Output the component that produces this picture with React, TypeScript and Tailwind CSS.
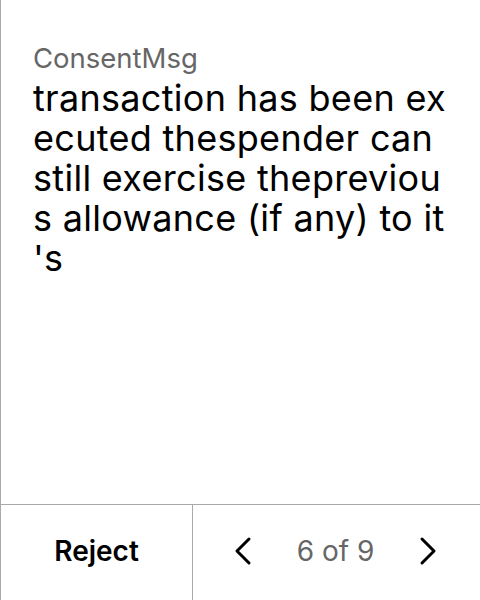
import { ChevronLeft, ChevronRight } from "lucide-react";

const lines = [
  "transaction has been ex",
  "ecuted thespender can",
  "still exercise thepreviou",
  "s allowance (if any) to it",
  "'s",
];

function App() {
  return (
    <div
      className="w-[480px] h-[600px] bg-white flex flex-col border-l border-[#aaaaaa]"
      style={{ fontFamily: "Inter, 'Noto Sans', sans-serif" }}
    >
      <div className="flex-1 pl-[32px] pr-[10px] pt-[40px]">
        <div className="text-[27.5px] leading-[36px] text-[#666666]">ConsentMsg</div>
        <div className="mt-[2px] text-[36px] leading-[40px] tracking-[0.3px] text-black whitespace-nowrap">
          {lines.map((l) => (
            <div key={l}>{l}</div>
          ))}
        </div>
      </div>
      <div className="h-[96px] flex border-t border-[#aaaaaa]">
        <button className="w-[192px] pb-[4px] border-r border-[#aaaaaa] text-[28px] font-semibold text-black">
          Reject
        </button>
        <div className="flex-1 flex items-center justify-between pl-[26px] pr-[28px] pb-[4px]">
          <ChevronLeft size={48} strokeWidth={1.5} className="text-black" />
          <span className="text-[28px] text-[#666666]">6 of 9</span>
          <ChevronRight size={48} strokeWidth={1.5} className="text-black" />
        </div>
      </div>
    </div>
  );
}

export default App;
